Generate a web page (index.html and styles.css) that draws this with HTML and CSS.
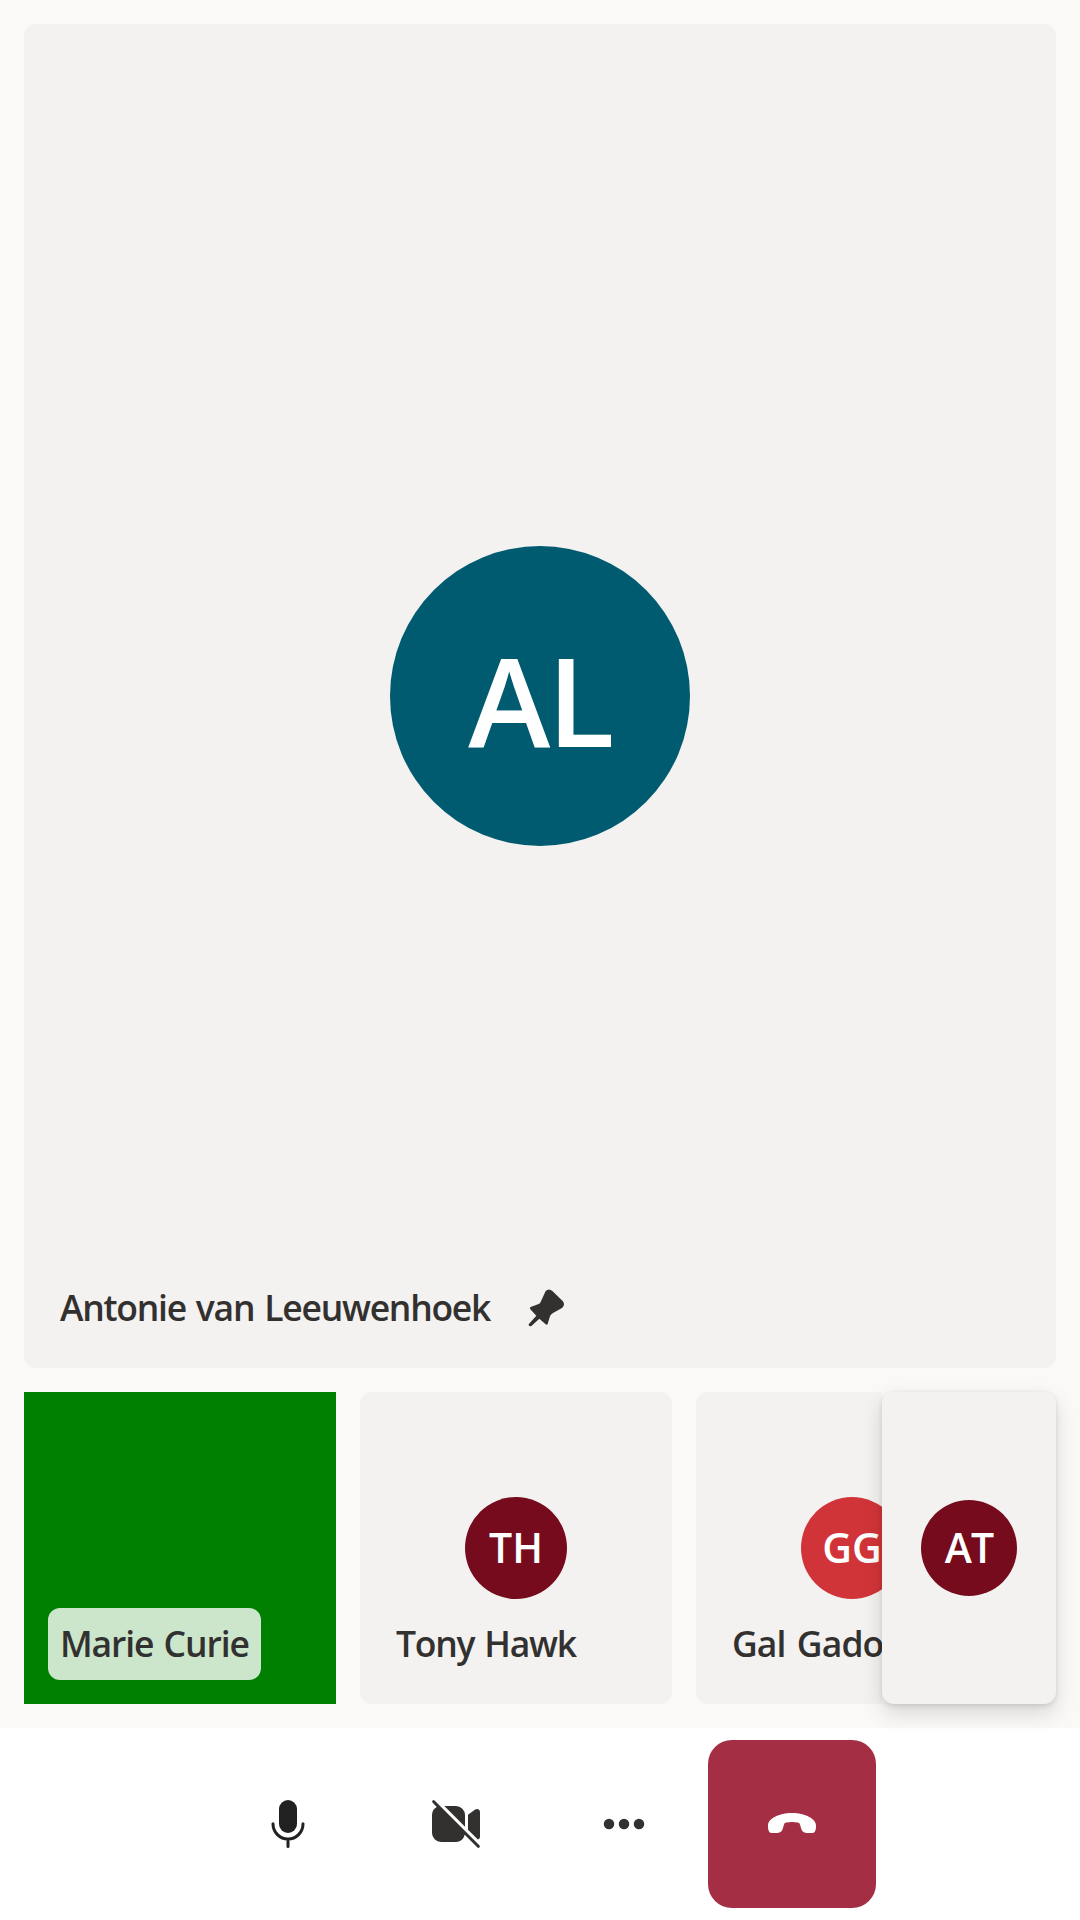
FILE: index.html
```html
<!DOCTYPE html>
<html lang="en">
<head>
<meta charset="utf-8">
<title>Call</title>
<link rel="stylesheet" href="styles.css">
</head>
<body>
<main class="stage">
  <section class="tile speaker">
    <div class="avatar avatar-large teal"><span>AL</span></div>
    <div class="label"><span class="name name-antonie">Antonie van Leeuwenhoek</span>
      <svg class="pin" viewBox="0 0 120 120"><path d="M62 18Q72 9 82 18L113 48Q122 59 111 69L84 84Q77 88 75 94L68 117Q65 121 61 117L43 101L20 122Q11 127 11 118L34 92L16 73Q12 69 17 66L39 58Q46 56 48 49Z"/></svg>
    </div>
  </section>
  <section class="gallery">
    <div class="strip">
      <div class="tile small video"><div class="label"><span class="name name-marie">Marie Curie</span></div></div>
      <div class="tile small"><div class="avatar avatar-small maroon"><span>TH</span></div><div class="label"><span class="name name-tony">Tony Hawk</span></div></div>
      <div class="tile small"><div class="avatar avatar-small red"><span>GG</span></div><div class="label"><span class="name name-gal">Gal Gadot</span></div></div>
    </div>
    <div class="tile self"><div class="avatar avatar-self maroon"><span>AT</span></div></div>
  </section>
</main>
<footer class="controls">
  <button class="control" aria-label="Mute">
    <svg class="icon mic" viewBox="0 0 20 20"><rect x="7" y="2" width="6" height="11" rx="3"/><path class="line" d="M5 9.9v.1a5 5 0 0 0 10 0v-.1M10 15v2.5"/></svg>
  </button>
  <button class="control" aria-label="Turn camera on">
    <svg class="icon" viewBox="0 0 20 20"><path d="M2.85 2.15a.5.5 0 0 0-.7.7L3.6 4.35A3 3 0 0 0 2 7v6a3 3 0 0 0 3 3h5a3 3 0 0 0 2.9-2.4l4.25 4.25a.5.5 0 0 0 .7-.7ZM13 10.88 6.12 4H10a3 3 0 0 1 3 3ZM14 6.93l2.4-1.73A1 1 0 0 1 18 6v8.3a1 1 0 0 1-.72.86L14 11.88Z"/></svg>
  </button>
  <button class="control" aria-label="More">
    <svg class="icon" viewBox="0 0 20 20"><circle cx="5" cy="10" r="1.75"/><circle cx="10" cy="10" r="1.75"/><circle cx="15" cy="10" r="1.75"/></svg>
  </button>
  <button class="control end" aria-label="Leave">
    <svg class="icon" viewBox="0 0 20 20"><path d="M10 6.35c4.3 0 8 1.9 8 4.05v.5c0 1.4-.5 2.1-1.4 2.1h-1.3c-1.2 0-1.9-.3-2.2-1.4l-.5-1.5c-.1-.4-.3-.5-.7-.6a9 9 0 0 0-3.8 0c-.4.1-.6.2-.7.6l-.5 1.5C6.6 12.7 5.9 13 4.7 13H3.4C2.5 13 2 12.3 2 10.9v-.5C2 8.25 5.7 6.35 10 6.35Z"/></svg>
  </button>
</footer>
</body>
</html>
```

FILE: styles.css
```css
* { box-sizing: border-box; }

body {
  margin: 0;
  width: 1080px;
  height: 1920px;
  display: flex;
  flex-direction: column;
  overflow: hidden;
  background: #faf9f8;
  color: #323130;
  font-family: "Open Sans", "Noto Sans", sans-serif;
  font-weight: 600;
}

.stage {
  flex: 1;
  display: flex;
  flex-direction: column;
  gap: 24px;
  padding: 24px;
}

.tile {
  position: relative;
  display: flex;
  align-items: center;
  justify-content: center;
  background: #f3f2f1;
  border-radius: 12px;
}

.speaker { flex: 1; }

.gallery { display: flex; height: 312px; }

.strip {
  display: flex;
  gap: 24px;
  width: 858px;
  overflow: hidden;
}

.small { flex: 0 0 312px; }

.self {
  width: 174px;
  z-index: 1;
  box-shadow: 0 9.6px 21.6px rgba(0, 0, 0, .132), 0 1.8px 5.4px rgba(0, 0, 0, .108);
}

.label {
  position: absolute;
  left: 24px;
  bottom: 24px;
  height: 72px;
  padding: 0 12px 3px;
  display: flex;
  align-items: center;
  gap: 35px;
  border-radius: 12px;
  white-space: nowrap;
}

.name { font-size: 35.5px; line-height: 48px; letter-spacing: -1.25px; word-spacing: 2px; }
.name-antonie { width: 430px; }
.name-gal { letter-spacing: -.9px; word-spacing: 3px; }

.video { background: #008000; border-radius: 0; }
.video .label { width: 213px; background: rgba(255, 255, 255, .8); }
.name-marie { letter-spacing: -1.1px; }

.pin { width: 40px; height: 40px; overflow: visible; margin-bottom: 4px; fill: #323130; }

.avatar {
  display: flex;
  align-items: center;
  justify-content: center;
  border-radius: 50%;
  color: #fff;
  line-height: 1;
}

.avatar-large { width: 300px; height: 300px; padding-top: 6px; font-size: 124px; letter-spacing: -3px; }
.avatar-small { width: 102px; height: 102px; padding-bottom: 1px; font-size: 41px; }
.avatar-self { width: 96px; height: 96px; padding-bottom: 1px; font-size: 41px; letter-spacing: -1px; }

.teal { background: #005b70; }
.maroon { background: #750b1c; }
.red { background: #d13438; }

.controls {
  height: 192px;
  display: flex;
  align-items: center;
  justify-content: center;
  background: #fff;
}

.control {
  width: 168px;
  height: 168px;
  padding: 0;
  display: flex;
  align-items: center;
  justify-content: center;
  border: 0;
  border-radius: 24px;
  background: transparent;
  color: #323130;
}

.end { background: #a42e43; color: #fff; }

.icon { width: 60px; height: 60px; fill: currentColor; }
.mic { color: #212121; }
.line { fill: none; stroke: currentColor; stroke-linecap: round; }
```
